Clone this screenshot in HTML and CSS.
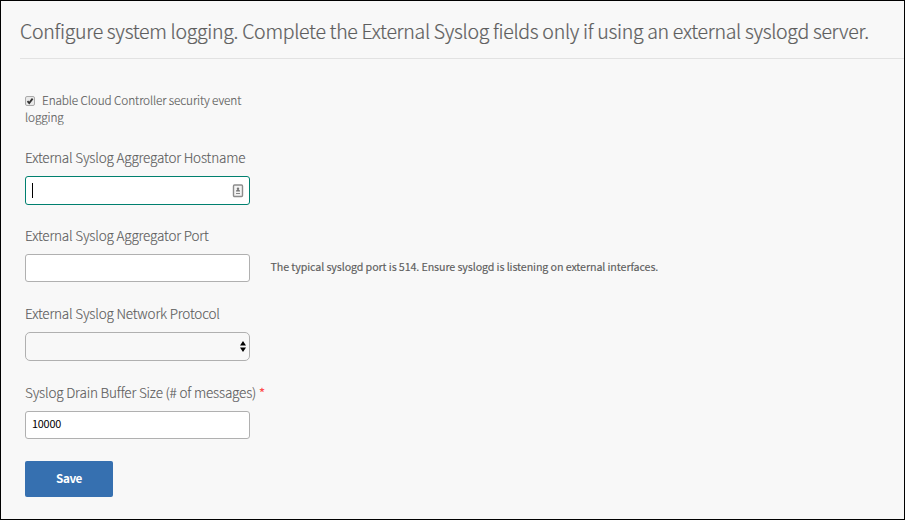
FILE: index.html
```html
<!DOCTYPE html>
<html lang="en">
<head>
<meta charset="utf-8">
<title>System Logging</title>
<link rel="stylesheet" href="styles.css">
</head>
<body>
<main class="panel">
  <h1 class="title"><span>Configure system logging. Complete the External Syslog fields only if using an external syslogd server.</span></h1>
  <form class="form">
    <label class="check">
      <svg class="check-box" width="10" height="10" viewBox="0 0 10 10"><rect x=".5" y=".5" width="9" height="9" rx="1.5" fill="#e9e9e9" stroke="#aaa"/><path d="M2.5 5.2 4.2 7 7.6 2.6" fill="none" stroke="#333" stroke-width="1.8"/></svg><span>Enable Cloud Controller security event</span><br><span>logging</span>
    </label>
    <div class="field">
      <div class="label"><span>External Syslog Aggregator Hostname</span></div>
      <div class="input focused">
        <i class="caret"></i>
        <svg width="12" height="14" viewBox="0 0 12 14"><rect x="1.5" y="1" width="9" height="11.5" rx="1" fill="#f4f4f4" stroke="#8c8c8c" stroke-width="1.4"/><circle cx="6" cy="4.7" r="1.2" fill="#777"/><path d="M4 7.5V6.9Q4 5.8 6 5.8T8 6.9v.6z" fill="#777"/><path d="M4 9.5h4" stroke="#888"/></svg>
      </div>
    </div>
    <div class="field">
      <div class="label"><span>External Syslog Aggregator Port</span></div>
      <div class="row">
        <div class="input"></div>
        <span class="hint">The typical syslogd port is 514. Ensure syslogd is listening on external interfaces.</span>
      </div>
    </div>
    <div class="field protocol">
      <div class="label"><span>External Syslog Network Protocol</span></div>
      <div class="input select">
        <svg width="6" height="11" viewBox="0 0 6 11"><path d="M3 0 6 4.6H0zM0 6.4H6L3 11z" fill="#000"/></svg>
      </div>
    </div>
    <div class="field buffer">
      <div class="label"><span>Syslog Drain Buffer Size (# of messages)</span> <b class="required">*</b></div>
      <div class="input"><span class="value">10000</span></div>
    </div>
    <button class="save" type="button">Save</button>
  </form>
</main>
</body>
</html>
```
FILE: styles.css
```css
* { box-sizing: border-box; }
body {
  margin: 0;
  font-family: "Noto Sans CJK SC", "Open Sans", sans-serif;
  color: #5e5e5e;
}
.panel {
  height: 520px;
  border: 1px solid #000;
  background: #f8f8f8;
  overflow: hidden;
}
.title {
  margin: 0 0 0 19px;
  height: 58px;
  padding-top: 14px;
  border-bottom: 1px solid #e2e2e2;
  font-size: 19.5px;
  font-weight: 300;
  line-height: 32px;
  letter-spacing: -.3px;
  -webkit-text-stroke: .2px;
  white-space: nowrap;
}
.form { padding: 32px 0 0 24px; }
.check {
  display: block;
  height: 56px;
  font-size: 11.8px;
  font-weight: 300;
  line-height: 17px;
  letter-spacing: -.12px;
  -webkit-text-stroke: .15px;
  white-space: nowrap;
}
.check-box { margin-right: 7px; vertical-align: -1px; }
.field { height: 78px; }
.protocol { height: 79px; }
.buffer { height: 79px; }
.label {
  height: 29px;
  font-size: 13.5px;
  font-weight: 300;
  line-height: 20px;
  letter-spacing: -.18px;
  -webkit-text-stroke: .15px;
  white-space: nowrap;
}
.required { color: #ff4a4a; font-size: 13px; font-weight: 400; }
.row { display: flex; align-items: center; }
.input {
  width: 225px;
  height: 28px;
  flex: none;
  display: flex;
  align-items: center;
  padding: 0 6px;
  border: 1px solid #b0b0b0;
  border-radius: 3px;
  background: #fff;
}
.focused { height: 29px; justify-content: space-between; border-color: #00806f; padding-right: 5px; }
.caret { width: 1px; height: 15px; background: #000; }
.select { height: 29px; justify-content: flex-end; padding-right: 3.5px; border-radius: 5px; background: #f8f8f8; }
.hint { margin-left: 20.5px; padding-bottom: 2px; font-size: 10.7px; line-height: 16px; letter-spacing: -.1px; -webkit-text-stroke: .15px; white-space: nowrap; }
.value { color: #000; font-size: 10.8px; line-height: 16px; letter-spacing: -.2px; padding-bottom: 4px; }
.save {
  display: block;
  width: 88px;
  height: 36px;
  padding: 0 0 2px;
  border: 0;
  border-radius: 2px;
  background: #3670b0;
  color: #fff;
  font: 700 11.7px/34px "Noto Sans CJK SC", sans-serif;
  letter-spacing: -.4px;
}
```
